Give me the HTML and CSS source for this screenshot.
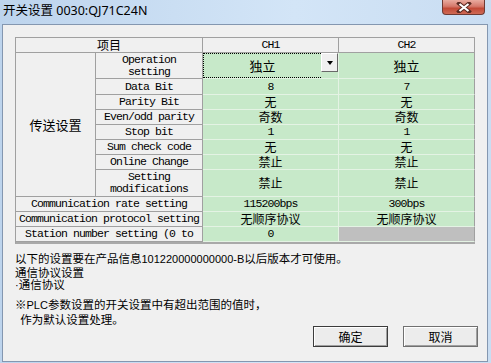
FILE: index.html
```html
<!DOCTYPE html>
<html lang="zh-CN">
<head>
    <meta charset="UTF-8">
    <title>开关设置 0030:QJ71C24N</title>
    <link rel="stylesheet" href="styles.css">
</head>
<body>
<div class="window">
    <div class="titlebar">
        <span class="title">开关设置 0030:QJ71C24N</span>
        <span class="close">
            <svg width="16" height="11" viewBox="0 0 16 11">
                <path d="M3 1.5 L13 9.5 M13 1.5 L3 9.5" stroke="#5a2a22" stroke-width="4" stroke-linecap="square"/>
                <path d="M3.5 2 L12.5 9 M12.5 2 L3.5 9" stroke="#fff" stroke-width="2.2"/>
            </svg>
        </span>
    </div>
    <div class="client">
        <div class="grid">
            <div class="cell head span2"><span class="cn">项目</span></div>
            <div class="cell head">CH1</div>
            <div class="cell head end">CH2</div>

            <div class="cell label group"><span class="cn big">传送设置</span></div>
            <div class="cell label">Operation<br>setting</div>
            <div class="cell value combo">
                <span class="combo-text"><span class="cn big">独立</span></span>
                <span class="combo-btn"><span class="arrow"></span></span>
            </div>
            <div class="cell value end"><span class="cn big">独立</span></div>

            <div class="cell label">Data Bit</div>
            <div class="cell value">8</div>
            <div class="cell value end">7</div>

            <div class="cell label">Parity Bit</div>
            <div class="cell value"><span class="cn">无</span></div>
            <div class="cell value end"><span class="cn">无</span></div>

            <div class="cell label">Even/odd parity</div>
            <div class="cell value"><span class="cn">奇数</span></div>
            <div class="cell value end"><span class="cn">奇数</span></div>

            <div class="cell label">Stop bit</div>
            <div class="cell value">1</div>
            <div class="cell value end">1</div>

            <div class="cell label">Sum check code</div>
            <div class="cell value"><span class="cn">无</span></div>
            <div class="cell value end"><span class="cn">无</span></div>

            <div class="cell label">Online Change</div>
            <div class="cell value"><span class="cn">禁止</span></div>
            <div class="cell value end"><span class="cn">禁止</span></div>

            <div class="cell label">Setting<br>modifications</div>
            <div class="cell value"><span class="cn">禁止</span></div>
            <div class="cell value end"><span class="cn">禁止</span></div>

            <div class="cell label span2">Communication rate setting</div>
            <div class="cell value">115200bps</div>
            <div class="cell value end">300bps</div>

            <div class="cell label span2">Communication protocol setting</div>
            <div class="cell value"><span class="cn">无顺序协议</span></div>
            <div class="cell value end"><span class="cn">无顺序协议</span></div>

            <div class="cell label span2">Station number setting (0 to</div>
            <div class="cell value">0</div>
            <div class="cell value off end"></div>
        </div>

        <div class="notes">
            <p>以下的设置要在产品信息<span class="num">101220000000000-B</span>以后版本才可使用。<br>通信协议设置<br><span class="num">·</span>通信协议</p>
            <p class="warn">※<span class="num">PLC</span>参数设置的开关设置中有超出范围的值时，<br>&nbsp;&nbsp;作为默认设置处理。</p>
        </div>

        <div class="buttons">
            <button class="btn default">确定</button>
            <button class="btn">取消</button>
        </div>
    </div>
</div>
</body>
</html>
```

FILE: styles.css
```css
body {
    margin: 0;
    font-family: "Noto Sans CJK SC", sans-serif;
    background: #fff;
}
.window {
    width: 491px;
    height: 363px;
    box-sizing: border-box;
    padding: 0 3px 2px 2px;
    background: linear-gradient(to right, #bdd4ed, #d3e5f7 60%, #c9ddf2);
    display: flex;
    flex-direction: column;
}
.titlebar {
    height: 24px;
    flex-shrink: 0;
    display: flex;
    justify-content: space-between;
    align-items: flex-start;
}
.title {
    font-family: "Noto Sans", "Noto Sans CJK SC", sans-serif;
    font-size: 12.5px;
    line-height: 22px;
    padding-left: 1px;
    color: #000;
}
.close {
    width: 43px;
    height: 15px;
    box-sizing: border-box;
    margin-right: 3px;
    border: 1px solid #6e3a33;
    border-top: none;
    border-radius: 0 0 4px 4px;
    background: linear-gradient(to bottom, #e9ab9f, #d5796b 45%, #c24a37 60%, #cf6a55);
    display: flex;
    align-items: center;
    justify-content: center;
}
.client {
    flex: 1;
    border: 1px solid #8497b0;
    background: #f0f0f0;
    padding: 12px 9px 0 12px;
    display: flex;
    flex-direction: column;
}

/* grid */
.grid {
    width: 460px;
    box-sizing: border-box;
    display: grid;
    grid-template-columns: 80px 107px 136px 136px;
    grid-template-rows: 15px 26px 16px 15px 15px 15px 15px 15px 27px 15px 15px 15px;
    border-top: 1px solid #a0a0a0;
    border-left: 1px solid #a0a0a0;
    border-bottom: 2px solid #a9a9a9;
    font-family: "Liberation Mono", monospace;
    font-size: 11.5px;
    letter-spacing: -0.9px;
    line-height: 12px;
    color: #000;
}
.cell {
    box-sizing: border-box;
    border-right: 1px solid #a0a0a0;
    border-bottom: 1px solid #a0a0a0;
    display: flex;
    align-items: center;
    justify-content: center;
    text-align: center;
    white-space: nowrap;
}
.span2 {
    grid-column: span 2;
}
.group {
    grid-row: span 8;
}
.head, .label {
    background: #f0f0f0;
}
.value {
    background: #c7e9c9;
    border-right-color: #e4f3e4;
    border-bottom-color: #e4f3e4;
}
.cell.end {
    border-right-color: #a0a0a0;
}
.value.off {
    background: #bfbfbf;
}
.cn {
    font-family: "Noto Sans CJK SC", sans-serif;
    font-size: 12px;
    letter-spacing: 0;
    line-height: 12px;
}
.cn.big {
    font-size: 13px;
}

/* combo in CH1 */
.combo {
    align-items: stretch;
    justify-content: flex-start;
}
.combo-text {
    flex: 1;
    border: 1px dotted #000;
    border-right: none;
    display: flex;
    align-items: center;
    justify-content: center;
}
.combo-btn {
    width: 17px;
    height: 19px;
    box-sizing: border-box;
    background: #f0f0f0;
    border: 1px solid;
    border-color: #fff #696969 #696969 #fff;
    display: flex;
    align-items: center;
    justify-content: center;
}
.arrow {
    width: 0;
    height: 0;
    border-left: 3px solid transparent;
    border-right: 3px solid transparent;
    border-top: 4px solid #000;
}

/* notes */
.notes {
    margin-top: 8px;
    font-size: 11.5px;
    line-height: 12.5px;
    color: #000;
}
.notes p {
    margin: 0;
}
.notes .warn {
    margin-top: 5px;
    line-height: 14px;
}
.num {
    font-family: "Liberation Sans", sans-serif;
    font-size: 11px;
}

/* buttons */
.buttons {
    margin-top: auto;
    padding-bottom: 14px;
    display: flex;
    justify-content: flex-end;
    gap: 15px;
}
.btn {
    width: 75px;
    height: 21px;
    padding: 0;
    font-family: "Noto Sans CJK SC", sans-serif;
    font-size: 12px;
    background: #ececec;
    border: 1px solid #707070;
    box-shadow: inset 1px 1px #fff, inset -1px -1px #a0a0a0;
    color: #000;
}
.btn.default {
    border-color: #3c3c3c;
}
```
